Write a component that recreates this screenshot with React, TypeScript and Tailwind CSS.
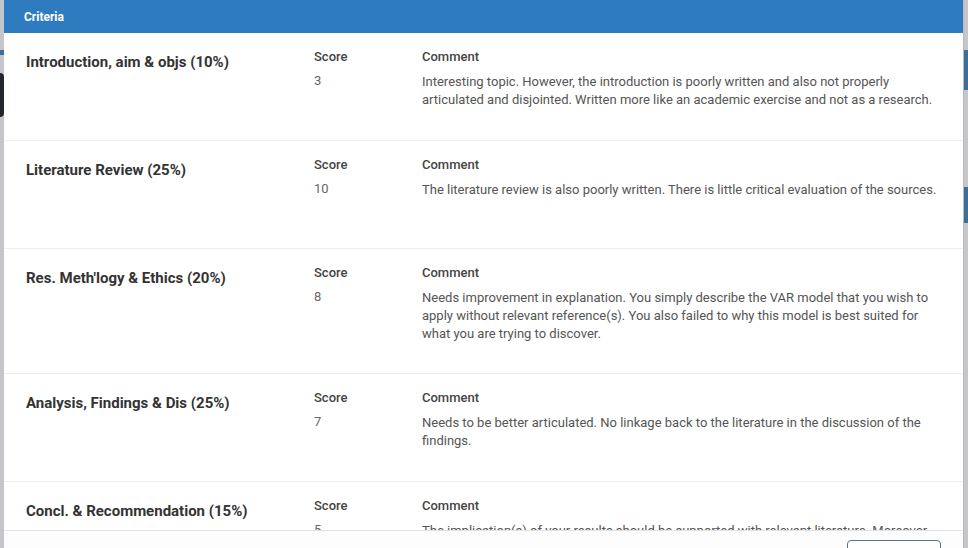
import React from 'react';

type Criterion = {
  title: string;
  score: number;
  comment: string;
};

const CRITERIA: Criterion[] = [
  {
    title: 'Introduction, aim & objs (10%)',
    score: 3,
    comment:
      'Interesting topic. However, the introduction is poorly written and also not properly articulated and disjointed. Written more like an academic exercise and not as a research.',
  },
  {
    title: 'Literature Review (25%)',
    score: 10,
    comment: 'The literature review is also poorly written. There is little critical evaluation of the sources.',
  },
  {
    title: "Res. Meth'logy & Ethics (20%)",
    score: 8,
    comment:
      'Needs improvement in explanation. You simply describe the VAR model that you wish to apply without relevant reference(s). You also failed to why this model is best suited for what you are trying to discover.',
  },
  {
    title: 'Analysis, Findings & Dis (25%)',
    score: 7,
    comment:
      'Needs to be better articulated. No linkage back to the literature in the discussion of the findings.',
  },
  {
    title: 'Concl. & Recommendation (15%)',
    score: 5,
    comment:
      'The implication(s) of your results should be supported with relevant literature. Moreover, the recommendations need to be clearer and linked to your findings.',
  },
];

function CriterionRow({ c }: { c: Criterion }) {
  return (
    <div className="flex min-h-[108px] border-b border-[#eeeeee] pl-[22px] pr-[24px] pt-[15px] pb-[30px]">
      {/* Title */}
      <div className="w-[288px] flex-shrink-0 pt-[4px] text-[15px] font-bold leading-[20px] text-[#333333]">
        {c.title}
      </div>

      {/* Score */}
      <div className="w-[108px] flex-shrink-0">
        <div className="text-[13px] font-medium leading-[17px] text-[#444444]">Score</div>
        <div className="mt-[7px] text-[13px] leading-[18px] text-[#666666]">{c.score}</div>
      </div>

      {/* Comment */}
      <div className="flex-1">
        <div className="text-[13px] font-medium leading-[17px] text-[#444444]">Comment</div>
        <p className="mt-[8px] text-[13px] leading-[18px] text-[#555555]">{c.comment}</p>
      </div>
    </div>
  );
}

export default function App() {
  return (
    <div
      className="relative h-[548px] w-[968px] overflow-hidden bg-[#c6c6ca]"
      style={{ fontFamily: 'Roboto, "Liberation Sans", sans-serif' }}
    >
      {/* page behind the overlay, peeking at the edges */}
      <div className="absolute left-0 top-[50px] h-[5px] w-[5px] bg-[#3a6f9c]" />
      <div className="absolute left-[-6px] top-[73px] h-[44px] w-[10px] rounded-[4px] bg-[#23262f]" />
      <div className="absolute right-0 top-[50px] h-[40px] w-[4px] bg-[#3a6f9c]" />
      <div className="absolute right-0 top-[187px] h-[36px] w-[4px] bg-[#3a6f9c]" />

      {/* Modal */}
      <div className="relative ml-[4px] mr-[4px] flex h-[600px] flex-col bg-white border-r border-[#b9b9bd]">
        <div className="flex h-[33px] flex-shrink-0 items-center bg-[#2f7bbf] px-[20px]">
          <span className="text-[12px] font-bold text-white">Criteria</span>
        </div>

        <div className="h-[497px] flex-shrink-0 overflow-hidden">
          {CRITERIA.map((c) => (
            <CriterionRow key={c.title} c={c} />
          ))}
        </div>

        <div className="flex flex-shrink-0 items-start justify-between border-t border-[#e3e3e3] bg-[#fdfdfd] pl-[16px] pr-[22px] pt-[9px]">
          <span className="pt-[4px] text-[15px] font-bold leading-[20px] text-[#333333]">Total Score: 34</span>
          <button className="h-[32px] w-[94px] rounded-[4px] border border-[#5f717c] bg-white text-[13px] text-[#333333]">
            Close
          </button>
        </div>
      </div>
    </div>
  );
}
